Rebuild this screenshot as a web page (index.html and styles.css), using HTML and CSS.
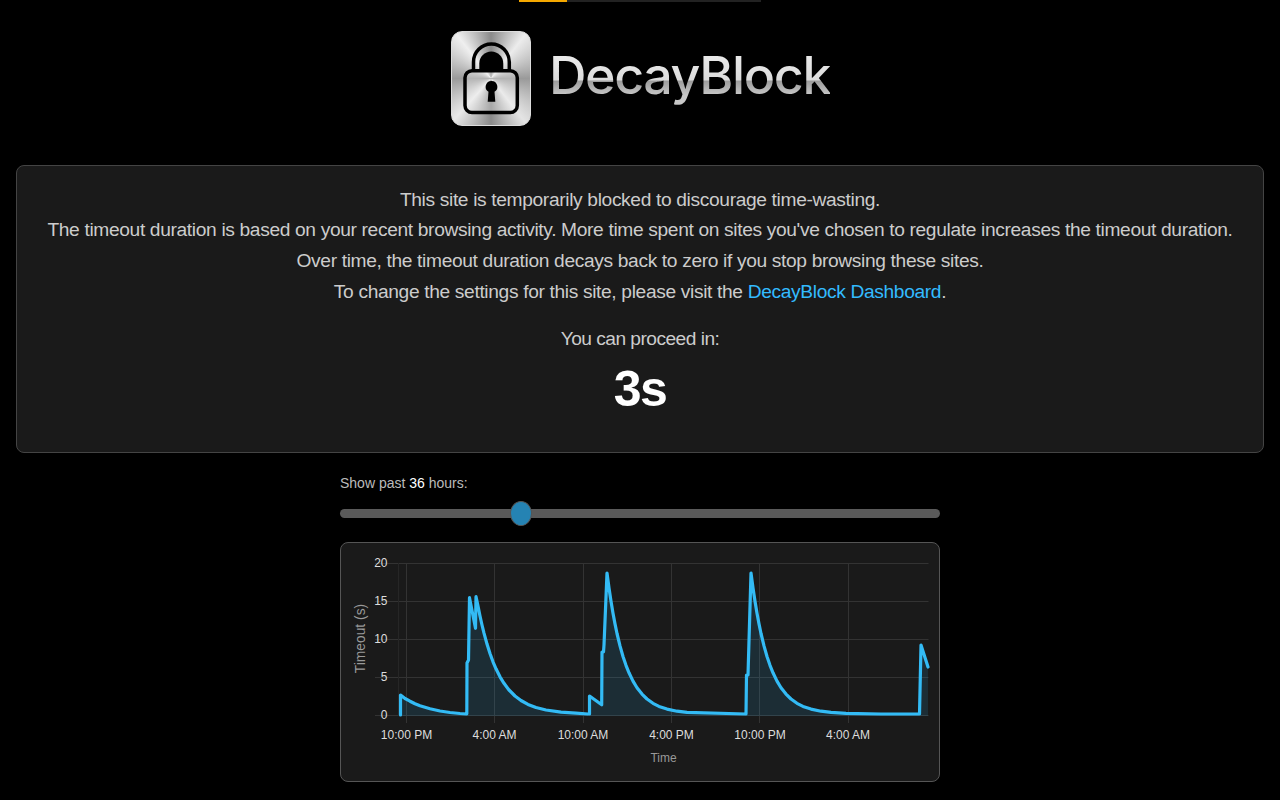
FILE: index.html
```html
<!DOCTYPE html>
<html lang="en">
<head>
<meta charset="utf-8">
<title>DecayBlock</title>
<link rel="stylesheet" href="styles.css">
</head>
<body>
<div class="progress"><div class="progress-fill"></div></div>
<header class="brand">
  <div class="tile">
    <svg class="lock" viewBox="452 32 78 93" aria-hidden="true">
      <path class="shackle" d="M473.500 70V62a17.900 17.900 0 0 1 35.800 0V70"/>
      <path class="shackle-inner" d="M479.300 70V63.600a12 12 0 0 1 24 0V70Z"/>
      <rect class="body-frame" x="465" y="70.800" width="52.300" height="41.800" rx="7"/>
      <path class="keyhole" d="M491.500 81a5.800 5.800 0 0 1 3 10.800L495.300 101.700H487.700L488.500 91.800A5.800 5.800 0 0 1 491.500 81Z"/>
    </svg>
  </div>
  <div class="wordmark">DecayBlock</div>
</header>
<main class="panel">
  <p class="message">This site is temporarily blocked to discourage time-wasting.<br>
  The timeout duration is based on your recent browsing activity. More time spent on sites you've chosen to regulate increases the timeout duration.<br>
  Over time, the timeout duration decays back to zero if you stop browsing these sites.<br>
  To change the settings for this site, please visit the <a href="#">DecayBlock Dashboard</a>.</p>
  <p class="proceed">You can proceed in:</p>
  <div class="countdown">3s</div>
</main>
<section class="history">
  <label class="range-label" for="hours">Show past <b>36</b> hours:</label>
  <input class="range" id="hours" type="range" min="1" max="120" value="36">
  <div class="chart-card">
    <svg class="chart" viewBox="341 543 598 238" role="img" aria-label="Timeout over time">
      <g class="grid">
        <path d="M375 563.500H928.500M375 601.500H928.500M375 639.500H928.500M375 677.500H928.500M375 715.500H928.500"/>
        <path class="grid-faint" d="M398.500 563V715.500"/>
        <path d="M406.500 563V723M494.500 563V723M583.500 563V723M671.500 563V723M759.500 563V723M848.500 563V723"/>
      </g>
      <path class="area" d="M400.500 716V695L405 698.500L410 701.200L415 703.700L420 705.700L430 708.800L440 711L450 712.500L460 713.500L466.800 714V716ZM467 716V663L468.500 660L469.500 597.700L475.500 628.300L476 596.700L478 606L480 616L482 625L484 633.200L487 644.100L490 653.500L493 661.800L496 668.800L500 676.800L504 683.300L509 690L515 696L521 700.500L528 704.400L536 707.500L546 710L561 712.100L576 713.100L588 714V716ZM589.500 716V696L601.700 704.700L602 652H603.500L604 645L607 573l2 15l2 13.300l2 11.900l2 10.700l2 9.600l3 12.400l3 10.600l3 8.800l3 7.500l4 8.300l4 6.700l5 6.300l5 4.900l6 4.300l6 3.100l8 2.700l10 2.100l10 1.200L746 714V716ZM746.500 716V675H748L751 573l2 15l2 13.300l2 11.900l2 10.700l2 9.600l3 12.400l3 10.600l3 8.800l3 7.500l4 8.300l4 6.700l5 6.300l5 4.900l6 4.300l6 3.100l8 2.700l10 2.100l10 1.200l15 .900l35 .700L919 714V716ZM919.500 716L921 645L928 667V716Z"/>
      <path class="line" d="M400.500 715V695L405 698.500L410 701.200L415 703.700L420 705.700L430 708.800L440 711L450 712.500L460 713.500L466.800 714L467 663L468.500 660L469.500 597.700L475.500 628.300L476 596.700L478 606L480 616L482 625L484 633.200L487 644.100L490 653.500L493 661.800L496 668.800L500 676.800L504 683.300L509 690L515 696L521 700.500L528 704.400L536 707.500L546 710L561 712.100L576 713.100L588 714H589.500V696L601.700 704.700L602 652H603.500L604 645L607 573l2 15l2 13.300l2 11.900l2 10.700l2 9.600l3 12.400l3 10.600l3 8.800l3 7.500l4 8.300l4 6.700l5 6.300l5 4.900l6 4.300l6 3.100l8 2.700l10 2.100l10 1.200L746 714L746.500 675H748L751 573l2 15l2 13.300l2 11.900l2 10.700l2 9.600l3 12.400l3 10.600l3 8.800l3 7.500l4 8.300l4 6.700l5 6.300l5 4.900l6 4.300l6 3.100l8 2.700l10 2.100l10 1.200l15 .900l35 .700L919.500 714L921 645L928 667"/>
      <g class="ticks ticks-y">
        <text x="387.500" y="567">20</text>
        <text x="387.500" y="605">15</text>
        <text x="387.500" y="643">10</text>
        <text x="387.500" y="681">5</text>
        <text x="387.500" y="719">0</text>
      </g>
      <g class="ticks ticks-x">
        <text x="406.500" y="739">10:00 PM</text>
        <text x="494.500" y="739">4:00 AM</text>
        <text x="583" y="739">10:00 AM</text>
        <text x="671.500" y="739">4:00 PM</text>
        <text x="760" y="739">10:00 PM</text>
        <text x="848" y="739">4:00 AM</text>
      </g>
      <text class="axis-title axis-title-y" transform="translate(364.500 638.500) rotate(-90)">Timeout (s)</text>
      <text class="axis-title" x="663.500" y="762">Time</text>
    </svg>
  </div>
</section>
</body>
</html>
```
FILE: styles.css
```css
* { box-sizing: border-box; }
html, body { margin: 0; background: #000; }
body {
  font-family: "Liberation Sans", Arial, sans-serif;
  color: #ccc;
  display: flex;
  flex-direction: column;
  align-items: center;
  padding-bottom: 16px;
}
.progress { width: 242px; height: 2px; background: #222; }
.progress-fill { width: 48px; height: 100%; background: #f5a800; }
.brand {
  display: flex;
  align-items: center;
  gap: 18px;
  margin-top: 29px;
  padding-left: 1px;
  height: 95px;
}
.tile {
  width: 80px;
  height: 95px;
  border-radius: 11px;
  border: 1px solid #ddd;
  background: conic-gradient(from 0deg, #8a8a8a 0deg, #ececec 38deg, #9a9a9a 90deg, #e4e4e4 142deg, #8a8a8a 180deg, #e8e8e8 222deg, #9a9a9a 270deg, #efefef 322deg, #8a8a8a 360deg);
}
.lock { display: block; width: 78px; height: 93px; }
.shackle { fill: none; stroke: #000; stroke-width: 3.5; }
.shackle-inner { fill: #000; }
.body-frame { fill: rgba(255, 255, 255, 0.25); stroke: #000; stroke-width: 3.5; }
.keyhole { fill: #000; }
.wordmark {
  font-family: Inter, sans-serif;
  font-size: 52px;
  font-weight: 450;
  letter-spacing: -1.4px;
  line-height: 64px;
  margin-top: -6px;
  background: linear-gradient(180deg, #f0f0f0 0%, #dcdcdc 56%, #9c9c9c 58%, #c8c8c8 80%);
  -webkit-background-clip: text;
  background-clip: text;
  color: transparent;
}
.panel {
  align-self: stretch;
  margin: 39px 16px 0;
  height: 288px;
  padding: 18.5px 16px 0;
  background: #1a1a1a;
  border: 1px solid #444;
  border-radius: 8px;
  text-align: center;
  font-size: 19.2px;
  line-height: 30.72px;
  letter-spacing: -0.35px;
}
.message, .proceed { margin: 0; }
.proceed { margin-top: 16.500px; letter-spacing: -0.54px; }
.message a { color: #33bbff; text-decoration: none; }
.countdown {
  font-size: 50px;
  font-weight: 700;
  letter-spacing: -1.5px;
  color: #fff;
  line-height: 56px;
  margin-top: 6px;
}
.history { width: 600px; margin-top: 21px; }
.range-label { display: block; font-size: 14px; line-height: 18px; color: #bbb; }
.range-label b { font-weight: 400; color: #fff; }
.range {
  display: block;
  width: 600px;
  height: 26px;
  margin: 8px 0 0;
  padding: 0;
  background: transparent;
  -webkit-appearance: none;
  appearance: none;
}
.range::-webkit-slider-runnable-track {
  height: 9px;
  border-radius: 5px;
  background: #5a5a5a;
}
.range::-webkit-slider-thumb {
  -webkit-appearance: none;
  width: 22px;
  height: 25px;
  margin-top: -8px;
  border-radius: 50%;
  background: #2583b3;
  border: 1px solid #555;
}
.chart-card {
  margin-top: 16px;
  height: 240px;
  border: 1px solid #555;
  border-radius: 8px;
  background: #1a1a1a;
}
.chart { display: block; width: 598px; height: 238px; }
.grid path { fill: none; stroke: #333; stroke-width: 1; }
.grid .grid-faint { stroke: #262626; }
.area { fill: rgba(51, 187, 255, 0.12); }
.line { fill: none; stroke: #33bbf5; stroke-width: 3.2; stroke-linejoin: round; stroke-linecap: round; }
.ticks text { font-size: 12px; fill: #ddd; }
.ticks-y text { text-anchor: end; }
.ticks-x text { text-anchor: middle; }
.axis-title { font-size: 12px; fill: #999; text-anchor: middle; }
.axis-title-y { font-size: 13.8px; }
```
